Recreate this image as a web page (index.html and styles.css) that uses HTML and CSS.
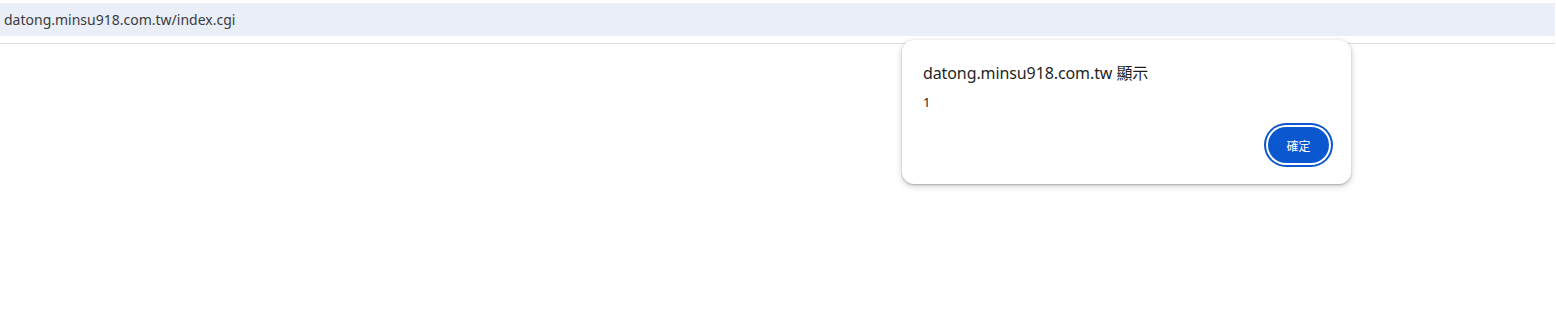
FILE: index.html
```html
<!DOCTYPE html>
<html lang="zh-Hant">
<head>
<meta charset="utf-8">
<title>index.cgi</title>
<link rel="stylesheet" href="styles.css">
</head>
<body>
<div class="page">
  <div class="urlbar"><span class="url">datong.minsu918.com.tw/index.cgi</span></div>
  <div class="rule"></div>
  <div class="dialog-layer">
    <div class="dialog" role="alertdialog">
      <div class="dialog-title">datong.minsu918.com.tw 顯示</div>
      <div class="dialog-msg">1</div>
      <div class="dialog-actions">
        <button class="ok-btn" type="button">確定</button>
      </div>
    </div>
  </div>
</div>
</body>
</html>
```
FILE: styles.css
```css
html, body {
  margin: 0;
  padding: 0;
  background: #ffffff;
}
body {
  font-family: "Noto Sans", "Open Sans", "Noto Sans CJK TC", sans-serif;
  width: 1556px;
  height: 309px;
  overflow: hidden;
}
.page {
  position: relative;
  width: 1556px;
  height: 309px;
  padding-top: 3px;
  box-sizing: border-box;
}
.urlbar {
  width: 1555px;
  height: 33px;
  background: #eaeef7;
  display: flex;
  align-items: center;
  padding-left: 4px;
  box-sizing: border-box;
}
.url {
  font-size: 14px;
  color: #3c3c3c;
}
.rule {
  width: 1555px;
  height: 1px;
  background: #dedede;
  margin-top: 7px;
}
.dialog-layer {
  position: absolute;
  left: 902px;
  top: 40px;
}
.dialog {
  width: 449px;
  height: 144px;
  box-sizing: border-box;
  background: #ffffff;
  border-radius: 12px;
  box-shadow: 0 1px 2px rgba(0,0,0,0.25), 0 2px 6px 1px rgba(0,0,0,0.15);
  padding: 22px 18px 0 21px;
  display: flex;
  flex-direction: column;
}
.dialog-title {
  font-family: "Noto Sans", "Noto Sans CJK TC", sans-serif;
  font-size: 16px;
  line-height: 22px;
  color: #1f1f1f;
  letter-spacing: -0.1px;
}
.dialog-msg {
  font-size: 13px;
  line-height: 18px;
  color: #1f1f1f;
  margin-top: 9px;
}
.dialog-actions {
  display: flex;
  justify-content: flex-end;
  margin-top: 16px;
}
.ok-btn {
  width: 61px;
  height: 36px;
  border-radius: 18px;
  border: none;
  background: #0b57d0;
  color: #ffffff;
  font-family: "Noto Sans CJK TC", sans-serif;
  font-size: 12px;
  padding: 0;
  box-shadow: 0 0 0 2px #ffffff, 0 0 0 4px #0b57d0;
  margin-right: 4px;
}
```
